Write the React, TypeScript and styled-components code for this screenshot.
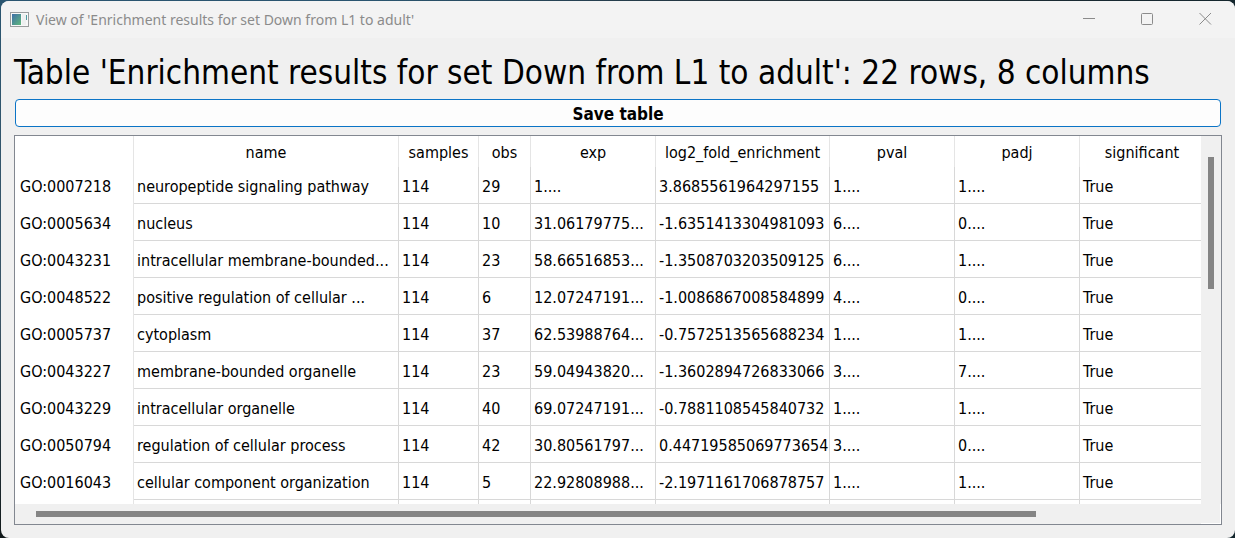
import React from 'react';
import styled, { createGlobalStyle } from 'styled-components';

const GlobalStyle = createGlobalStyle`
  * { box-sizing: border-box; }
  html, body { margin: 0; }
  body {
    background: linear-gradient(90deg, transparent 0 30%, #22313a 60%, #14262d), linear-gradient(#2a5570, #3c5566 60%, #101819);
    font-family: 'DejaVu Sans Condensed', 'DejaVu Sans', sans-serif;
    color: #000;
  }
`;

const Window = styled.div`
  display: flex;
  flex-direction: column;
  height: 100vh;
  padding: 1px 0 0 1px;
`;

const Surface = styled.div`
  flex: 1;
  min-height: 0;
  display: flex;
  flex-direction: column;
  background: #f0f0f0;
  border-radius: 8px;
  overflow: hidden;
`;

const TitleBar = styled.header`
  display: flex;
  align-items: center;
  flex: none;
  height: 37px;
  padding: 0 1px 0 9px;
  gap: 7px;
  background: #f3f3f3;
  color: #8b8b8b;
`;

const TitleText = styled.span`
  flex: 1;
  font-family: 'Noto Sans', 'Open Sans', sans-serif;
  font-size: 14px;
  line-height: 20px;
  white-space: nowrap;
`;

const WindowControls = styled.div`
  display: flex;
  align-self: flex-start;
`;

const WindowButton = styled.button`
  display: flex;
  align-items: center;
  justify-content: center;
  width: 58px;
  height: 34px;
  padding: 0;
  border: 0;
  background: transparent;
  color: #8b8b8b;
`;

const Content = styled.main`
  flex: 1;
  min-height: 0;
  display: flex;
  flex-direction: column;
  padding: 15px 13px 13px;
`;

const Heading = styled.h1`
  margin: 0 0 6px;
  font-size: 33px;
  line-height: 40px;
  font-weight: 400;
  white-space: nowrap;
`;

const SaveButton = styled.button`
  flex: none;
  height: 28px;
  margin: 0 1px 8px;
  padding: 2px 0 0;
  border: 1px solid #0b74c6;
  border-radius: 4px;
  background: #fdfdfd;
  color: #000;
  font: bold 17px/24px 'DejaVu Sans Condensed', 'DejaVu Sans', sans-serif;
`;

const Frame = styled.section`
  flex: 1;
  min-height: 0;
  display: grid;
  grid-template-columns: minmax(0, 1fr) 20px;
  grid-template-rows: minmax(0, 1fr) 20px;
  border: 1px solid #828790;
  background: #f0f0f0;
`;

const Viewport = styled.div`
  overflow: hidden;
  background: #fff;
`;

const Table = styled.table`
  width: 1190px;
  min-width: 100%;
  table-layout: fixed;
  border-collapse: separate;
  border-spacing: 0;
  font-size: 16px;
  line-height: 20px;
  white-space: nowrap;
`;

const Column = styled.col<{ $width?: number }>`
  width: ${({ $width }) => ($width ? `${$width}px` : 'auto')};
`;

const HeaderCell = styled.th`
  height: 31px;
  padding: 2px 0 0;
  border-right: 1px solid #e5e5e5;
  font-weight: 400;
  text-align: center;
`;

const RowHeader = styled.th`
  height: 37px;
  padding: 2px 0 0 5px;
  border-right: 1px solid #e5e5e5;
  font-weight: 400;
  text-align: left;
`;

const Cell = styled.td`
  height: 37px;
  padding: 4px 0 0 3px;
  border-right: 1px solid #d8d8d8;
  border-bottom: 1px solid #d8d8d8;
`;

const VerticalBar = styled.div`
  padding: 21px 6px 0 7px;
`;

const HorizontalBar = styled.div`
  padding: 7px 0 0 21px;
`;

const Thumb = styled.div<{ $vertical?: boolean }>`
  width: ${({ $vertical }) => ($vertical ? '6px' : '85.8%')};
  height: ${({ $vertical }) => ($vertical ? '38%' : '6px')};
  background: #858585;
`;

const Corner = styled.div`
  border: solid #fff;
  border-width: 0 1px 1px 0;
`;

const columns = [
  { label: 'name', width: 265 },
  { label: 'samples', width: 80 },
  { label: 'obs', width: 52 },
  { label: 'exp', width: 125 },
  { label: 'log2_fold_enrichment', width: 174 },
  { label: 'pval', width: 125 },
  { label: 'padj', width: 125 },
  { label: 'significant' },
];

const rows = [
  ['GO:0007218', 'neuropeptide signaling pathway', '114', '29', '1....', '3.8685561964297155', '1....', '1....', 'True'],
  ['GO:0005634', 'nucleus', '114', '10', '31.06179775...', '-1.6351413304981093', '6....', '0....', 'True'],
  ['GO:0043231', 'intracellular membrane-bounded...', '114', '23', '58.66516853...', '-1.3508703203509125', '6....', '1....', 'True'],
  ['GO:0048522', 'positive regulation of cellular ...', '114', '6', '12.07247191...', '-1.0086867008584899', '4....', '0....', 'True'],
  ['GO:0005737', 'cytoplasm', '114', '37', '62.53988764...', '-0.7572513565688234', '1....', '1....', 'True'],
  ['GO:0043227', 'membrane-bounded organelle', '114', '23', '59.04943820...', '-1.3602894726833066', '3....', '7....', 'True'],
  ['GO:0043229', 'intracellular organelle', '114', '40', '69.07247191...', '-0.7881108545840732', '1....', '1....', 'True'],
  ['GO:0050794', 'regulation of cellular process', '114', '42', '30.80561797...', '0.44719585069773654', '3....', '0....', 'True'],
  ['GO:0016043', 'cellular component organization', '114', '5', '22.92808988...', '-2.1971161706878757', '1....', '1....', 'True'],
  ['', '', '', '', '', '', '', '', ''],
];

const AppIcon = () => (
  <svg width="19" height="15" viewBox="0 0 19 15" aria-hidden="true">
    <defs>
      <linearGradient id="pane" x1="0" y1="0" x2="1" y2="1">
        <stop offset="0" stopColor="#3f6fa8" />
        <stop offset="1" stopColor="#5fb87c" />
      </linearGradient>
    </defs>
    <rect x="0.5" y="0.5" width="18" height="14" fill="#f8f8f8" stroke="#9a9d9e" />
    <rect x="2" y="2" width="9" height="11" fill="url(#pane)" />
    <rect x="12" y="2" width="4" height="11" fill="#eef0f0" />
    <rect x="16" y="3" width="1" height="5" fill="#4f9aa0" />
  </svg>
);

const glyphs: Record<string, React.ReactNode> = {
  Minimize: <path d="M2 8.5h12" />,
  Maximize: <rect x="2.5" y="3.5" width="11" height="11" rx="1" />,
  Close: <path d="M2.5 3l11.5 11.5M14 3L2.5 14.5" />,
};

export default function App() {
  return (
    <Window>
      <GlobalStyle />
      <Surface>
        <TitleBar>
          <AppIcon />
          <TitleText>View of 'Enrichment results for set Down from L1 to adult'</TitleText>
          <WindowControls>
            {Object.entries(glyphs).map(([label, glyph]) => (
              <WindowButton key={label} aria-label={label}>
                <svg width="16" height="16" viewBox="0 0 16 16" fill="none" stroke="currentColor">
                  {glyph}
                </svg>
              </WindowButton>
            ))}
          </WindowControls>
        </TitleBar>
        <Content>
          <Heading>Table 'Enrichment results for set Down from L1 to adult': 22 rows, 8 columns</Heading>
          <SaveButton>Save table</SaveButton>
          <Frame>
            <Viewport>
              <Table>
                <colgroup>
                  <Column $width={119} />
                  {columns.map((c) => (
                    <Column key={c.label} $width={c.width} />
                  ))}
                </colgroup>
                <thead>
                  <tr>
                    <HeaderCell as="td" />
                    {columns.map((c) => (
                      <HeaderCell key={c.label} scope="col">{c.label}</HeaderCell>
                    ))}
                  </tr>
                </thead>
                <tbody>
                  {rows.map(([id, ...values]) => (
                    <tr key={id}>
                      <RowHeader scope="row">{id}</RowHeader>
                      {values.map((value, i) => (
                        <Cell key={columns[i].label}>{value}</Cell>
                      ))}
                    </tr>
                  ))}
                </tbody>
              </Table>
            </Viewport>
            <VerticalBar><Thumb $vertical /></VerticalBar>
            <HorizontalBar><Thumb /></HorizontalBar>
            <Corner />
          </Frame>
        </Content>
      </Surface>
    </Window>
  );
}
